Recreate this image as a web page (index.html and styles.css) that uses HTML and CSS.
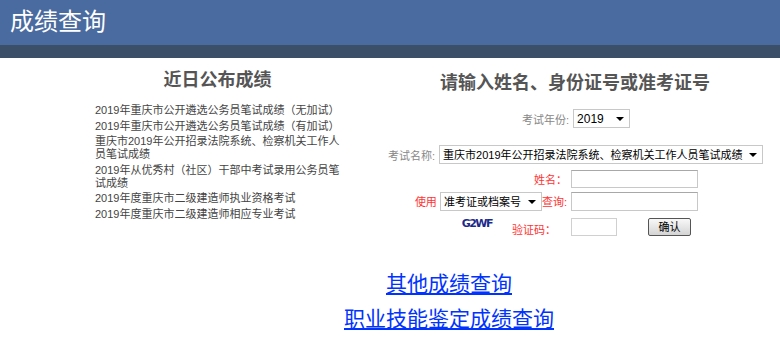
FILE: index.html
```html
<!DOCTYPE html>
<html lang="zh-CN">
<head>
  <meta charset="UTF-8" />
  <title>成绩查询</title>
  <link rel="stylesheet" href="styles.css">
</head>
<body>

  <div class="top">
    <h1>成绩查询</h1>
  </div>

  <div class="main">
    <div class="recent">
      <h2>近日公布成绩</h2>
      <ul>
        <li>2019年重庆市公开遴选公务员笔试成绩（无加试）</li>
        <li>2019年重庆市公开遴选公务员笔试成绩（有加试）</li>
        <li>重庆市2019年公开招录法院系统、检察机关工作人员笔试成绩</li>
        <li>2019年从优秀村（社区）干部中考试录用公务员笔试成绩</li>
        <li>2019年度重庆市二级建造师执业资格考试</li>
        <li>2019年度重庆市二级建造师相应专业考试</li>
      </ul>
    </div>

    <div class="query">
      <h2 class="query-title">请输入姓名、身份证号或准考证号</h2>

      <div class="row row-year">
        <span class="gray">考试年份:</span>
        <span class="sel sel-year">
          <select><option>2019</option></select>
        </span>
      </div>

      <div class="row row-name">
        <span class="gray">考试名称:</span>
        <span class="sel sel-exam">
          <select><option>重庆市2019年公开招录法院系统、检察机关工作人员笔试成绩</option></select>
        </span>
      </div>

      <div class="form">
        <div class="line line-1">
          <div class="lab">姓名：</div>
          <div class="fld"><input type="text" class="txt"></div>
        </div>
        <div class="line line-2">
          <div class="lab">使用 <span class="sel sel-type"><select><option>准考证或档案号</option></select></span>查询:</div>
          <div class="fld"><input type="text" class="txt"></div>
        </div>
        <div class="line line-3">
          <div class="lab"><span class="captcha">G2WF</span><span class="code-lab">验证码：</span></div>
          <div class="fld">
            <input type="text" class="code">
            <button class="btn">确认</button>
          </div>
        </div>
      </div>
    </div>
  </div>

  <div class="links">
    <a href="#">其他成绩查询</a><br>
    <a href="#">职业技能鉴定成绩查询</a>
  </div>

</body>
</html>
```

FILE: styles.css
```css
body {
  margin: 0;
  font-family: "Liberation Sans", "Noto Sans CJK SC", sans-serif;
  background-color: #fff;
  color: #444;
}

.top {
  height: 45px;
  background-color: #4a6b9f;
  border-bottom: 13px solid #3b5068;
}

.top h1 {
  margin: 0;
  padding-left: 10px;
  font-size: 24px;
  font-weight: normal;
  line-height: 43px;
  color: #fff;
}

.main {
  display: flex;
}

.recent {
  margin-left: 95px;
  width: 245px;
}

.recent h2 {
  margin: 10px 0 0;
  font-size: 18px;
  line-height: 24px;
  text-align: center;
  color: #555;
}

.recent ul {
  list-style: none;
  margin: 12px 0 0;
  padding: 0;
  font-size: 11px;
  line-height: 13px;
  color: #444;
}

.recent li {
  margin-bottom: 2.5px;
}

.query {
  margin-left: 30px;
  width: 410px;
  font-size: 11px;
}

.query-title {
  margin: 13px 0 0;
  font-size: 18px;
  line-height: 24px;
  text-align: center;
  color: #555;
}

.row {
  display: flex;
  justify-content: center;
  align-items: center;
  gap: 4px;
}

.row-year {
  margin-top: 14px;
  height: 19px;
  padding-left: 2px;
}

.row-name {
  margin-top: 17px;
  height: 19px;
  padding-left: 1px;
}

.gray {
  color: #888;
}

.sel {
  position: relative;
  display: inline-block;
}

.sel select {
  appearance: none;
  -webkit-appearance: none;
  height: 19px;
  margin: 0;
  padding: 0 16px 0 3px;
  border: 1px solid #c8c8c8;
  border-radius: 0;
  background-color: #fff;
  font-family: "Liberation Sans", "Noto Sans CJK SC", sans-serif;
  font-size: 11px;
  color: #000;
}

.sel::after {
  content: "";
  position: absolute;
  right: 6px;
  top: 8px;
  border-left: 4px solid transparent;
  border-right: 4px solid transparent;
  border-top: 4px solid #000;
  pointer-events: none;
}

.sel-year select {
  width: 57px;
  font-size: 12px;
}

.sel-exam select {
  width: 324px;
}

.sel-type select {
  width: 102px;
}

.form {
  margin-top: 6px;
}

.line {
  display: flex;
  align-items: center;
}

.line-2 {
  margin-top: 4px;
}

.line-3 {
  margin-top: 6px;
}

.lab {
  width: 197px;
  text-align: right;
  color: #f33;
}

.fld {
  margin-left: 4px;
  display: flex;
  align-items: center;
}

.txt {
  box-sizing: border-box;
  width: 127px;
  height: 18px;
  margin: 0;
  border: 1px solid #c8c8c8;
  border-top-color: #a8a8a8;
}

.line-2 .txt {
  height: 19px;
}

.code {
  box-sizing: border-box;
  width: 46px;
  height: 18px;
  margin: 0;
  border: 1px solid #d0d0d0;
}

.btn {
  box-sizing: border-box;
  width: 43px;
  height: 18px;
  margin-left: 31px;
  padding: 0;
  border: 1px solid #555;
  border-radius: 2px;
  background: linear-gradient(#f8f8f8, #d4d4d4);
  font-family: "Liberation Sans", "Noto Sans CJK SC", sans-serif;
  font-size: 11px;
  line-height: 14px;
  color: #000;
}

.captcha {
  display: inline-block;
  margin-right: 20px;
  font-family: "DejaVu Sans", sans-serif;
  font-size: 11px;
  font-weight: bold;
  letter-spacing: -1.5px;
  color: #1c2a8c;
  vertical-align: 5px;
}

.code-lab {
  display: inline-block;
  margin-right: 11px;
  vertical-align: -2px;
}

.links {
  padding-left: 118px;
  margin-top: 29px;
  text-align: center;
  font-size: 21px;
  line-height: 35px;
}

.links a {
  color: #0033ff;
}
```
